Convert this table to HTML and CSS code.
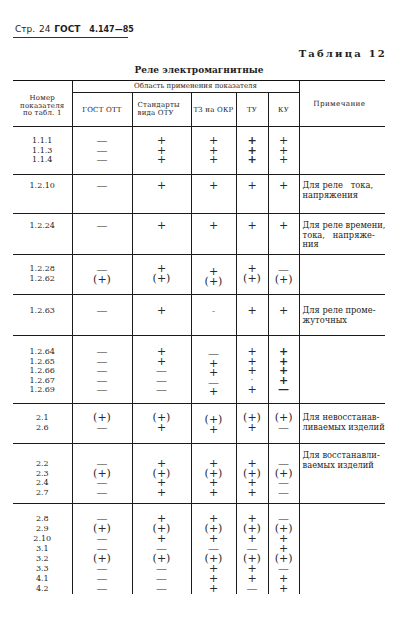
FILE: index.html
```html
<!DOCTYPE html>
<html lang="ru">
<head>
<meta charset="utf-8">
<title>ГОСТ 4.147—85, стр. 24</title>
<link rel="stylesheet" href="styles.css">
</head>
<body>
<div class="page">
  <div class="runhead"><span>Стр.</span> <span>24</span> <b>ГОСТ</b> <b class="gnum">4.147—85</b></div>
  <div class="tabno">Таблица 12</div>
  <div class="caption">Реле электромагнитные</div>
  <table class="grid">
    <colgroup>
      <col class="c-num"><col class="c-gost"><col class="c-std"><col class="c-tz"><col class="c-tu"><col class="c-ku"><col class="c-note">
    </colgroup>
    <thead>
      <tr class="h1">
        <th rowspan="2" class="first hnum">Номер<br>показателя<br>по табл. 1</th>
        <th colspan="5" class="harea">Область применения показателя</th>
        <th rowspan="2" class="hnote">Примечание</th>
      </tr>
      <tr class="h2">
        <th class="hsub">ГОСТ ОТТ</th>
        <th class="hsub two">Стандарты<br>вида ОТУ</th>
        <th class="hsub">ТЗ на ОКР</th>
        <th class="hsub">ТУ</th>
        <th class="hsub">КУ</th>
      </tr>
    </thead>
    <tbody>
      <tr class="r1">
        <td class="first num">1.1.1<br>1.1.3<br>1.1.4</td>
        <td class="v">—<br>—<br>—</td>
        <td class="v">+<br>+<br>+</td>
        <td class="v">+<br>+<br>+</td>
        <td class="v bold">+<br>+<br>+</td>
        <td class="v">+<br>+<br>+</td>
        <td class="note"></td>
      </tr>
      <tr class="r2">
        <td class="first num">1.2.10</td>
        <td class="v">—</td>
        <td class="v">+</td>
        <td class="v">+</td>
        <td class="v">+</td>
        <td class="v">+</td>
        <td class="note">Для реле&nbsp;&nbsp; тока,<br>напряжения</td>
      </tr>
      <tr class="r3">
        <td class="first num">1.2.24</td>
        <td class="v">—</td>
        <td class="v">+</td>
        <td class="v">+</td>
        <td class="v">+</td>
        <td class="v">+</td>
        <td class="note">Для реле времени,<br>тока,&nbsp;&nbsp; напряже-<br>ния</td>
      </tr>
      <tr class="r4">
        <td class="first num">1.2.28<br>1.2.62</td>
        <td class="v dn1">—<br>(+)</td>
        <td class="v">+<br>(+)</td>
        <td class="v dn">+<br>(+)</td>
        <td class="v">+<br>(+)</td>
        <td class="v dn1">—<br>(+)</td>
        <td class="note"></td>
      </tr>
      <tr class="r5">
        <td class="first num">1.2.63</td>
        <td class="v">—</td>
        <td class="v">+</td>
        <td class="v"><span class="sm">-</span></td>
        <td class="v">+</td>
        <td class="v">+</td>
        <td class="note">Для реле проме-<br>жуточных</td>
      </tr>
      <tr class="r6">
        <td class="first num">1.2.64<br>1.2.65<br>1.2.66<br>1.2.67<br>1.2.69</td>
        <td class="v">—<br>—<br>—<br>—<br>—</td>
        <td class="v">+<br>+<br>—<br>—<br>—</td>
        <td class="v dn">—<br>+<br>+<br>—<br>+</td>
        <td class="v">+<br>+<br>+<br><span class="dot">·</span><br>+</td>
        <td class="v bold">+<br>+<br>+<br>+<br>—</td>
        <td class="note"></td>
      </tr>
      <tr class="r7">
        <td class="first num">2.1<br>2.6</td>
        <td class="v">(+)<br>—</td>
        <td class="v">(+)<br>+</td>
        <td class="v dn">(+)<br>+</td>
        <td class="v">(+)<br>+</td>
        <td class="v">(+)<br>—</td>
        <td class="note">Для невосстанав-<br>ливаемых изделий</td>
      </tr>
      <tr class="r8">
        <td class="first num">2.2<br>2.3<br>2.4<br>2.7</td>
        <td class="v">—<br>(+)<br>—<br>—</td>
        <td class="v">+<br>(+)<br>+<br>+</td>
        <td class="v">+<br>(+)<br>+<br>+</td>
        <td class="v">+<br>(+)<br>+<br>+</td>
        <td class="v">—<br>(+)<br>—<br>—</td>
        <td class="note">Для восстанавли-<br>ваемых изделий</td>
      </tr>
      <tr class="r9">
        <td class="first num">2.8<br>2.9<br>2.10<br>3.1<br>3.2<br>3.3<br>4.1<br>4.2</td>
        <td class="v">—<br>(+)<br>—<br>—<br>(+)<br>—<br>—<br>—</td>
        <td class="v">+<br>(+)<br>+<br>—<br>(+)<br>—<br>—<br>—</td>
        <td class="v">+<br>(+)<br>+<br>—<br>(+)<br>+<br>+<br>+</td>
        <td class="v">+<br>(+)<br>+<br>—<br>(+)<br>+<br>+<br>—</td>
        <td class="v">—<br>(+)<br>+<br>+<br>(+)<br>—<br>+<br>+</td>
        <td class="note"></td>
      </tr>
    </tbody>
  </table>
</div>
</body>
</html>
```

FILE: styles.css
```css
html, body {
  margin: 0;
  padding: 0;
  background: #ffffff;
}

.page {
  width: 374px;
  padding: 24px 0 0 13px;
  color: #1e1e1e;
  font-family: "DejaVu Serif", "Liberation Serif", serif;
}

.runhead {
  width: 113px;
  padding: 0 0 2px 2px;
  border-bottom: 1px solid #333;
  font: 9px/11px "DejaVu Sans", "Liberation Sans", sans-serif;
  word-spacing: 1px;
  white-space: nowrap;
}

.runhead b {
  font-weight: bold;
}

.runhead .gnum {
  margin-left: 5px;
  font-size: 8px;
}

.tabno {
  margin-top: 10px;
  text-align: right;
  font: bold 10px/12px "DejaVu Serif", serif;
  letter-spacing: 2.2px;
}

.caption {
  margin-top: 4px;
  width: 372px;
  text-align: center;
  font: bold 9px/12px "DejaVu Serif", serif;
}

.grid {
  margin-top: 4px;
  width: 372px;
  border-collapse: collapse;
  table-layout: fixed;
}

.c-num { width: 59px; }
.c-gost { width: 60px; }
.c-std { width: 59px; }
.c-tz { width: 45px; }
.c-tu { width: 32px; }
.c-ku { width: 31px; }
.c-note { width: 86px; }

.grid th,
.grid td {
  padding: 0;
  border-top: 1px solid #1b1b1b;
  border-left: 1px solid #1b1b1b;
  vertical-align: top;
  text-align: center;
  font-weight: normal;
}

.grid .first {
  border-left: none;
}

.grid thead tr:first-child th {
  border-top: 1.5px solid #111;
}

.h1 { height: 12px; }
.h2 { height: 34px; }

.hnum {
  padding-top: 14px !important;
  font-size: 7px;
  line-height: 7.6px;
  letter-spacing: 0.2px;
}

.harea {
  padding-left: 20px !important;
  font-size: 7px;
  line-height: 11px;
  white-space: nowrap;
}

.hsub {
  font-size: 7px;
  line-height: 8px;
  letter-spacing: 0.2px;
  vertical-align: middle !important;
  white-space: nowrap;
}

.hsub.two {
  text-align: left;
  padding-left: 5px !important;
  line-height: 7.5px;
}

.hnote {
  padding-top: 18px !important;
  padding-right: 6px !important;
  font-size: 7.3px;
  letter-spacing: 0.3px;
}

.num {
  font-size: 8px;
  line-height: 9.5px;
}

.v {
  font-size: 11px;
  line-height: 9.5px;
  color: #2a2a2a;
}

.v.bold {
  font-weight: bold;
}

.v .sm {
  font-size: 9px;
  color: #777;
}

.v .dot {
  color: #999;
}

.note {
  text-align: left !important;
  padding-left: 3px !important;
  font-size: 8.3px;
  line-height: 9.7px;
  white-space: nowrap;
}

.r1 { height: 48px; }
.r2 { height: 39px; }
.r3 { height: 41px; }
.r4 { height: 40px; }
.r5 { height: 41px; }
.r6 { height: 68px; }
.r7 { height: 40px; }
.r8 { height: 60px; }
.r9 { height: 90px; }

.r1 td { padding-top: 9px; }
.r2 td { padding-top: 6px; }
.r3 td { padding-top: 7px; }
.r4 td { padding-top: 9px; }
.r4 td.dn1 { padding-top: 10px; }
.r4 td.dn { padding-top: 12px; }
.r5 td { padding-top: 11px; }
.r6 td { padding-top: 11px; }
.r6 td.dn { padding-top: 13px; }
.r7 td { padding-top: 9px; }
.r7 td.dn { padding-top: 11px; }
.r8 td { padding-top: 15px; }
.r8 td.note { padding-top: 7px; }
.r9 td { padding-top: 10px; line-height: 10px; }
```
